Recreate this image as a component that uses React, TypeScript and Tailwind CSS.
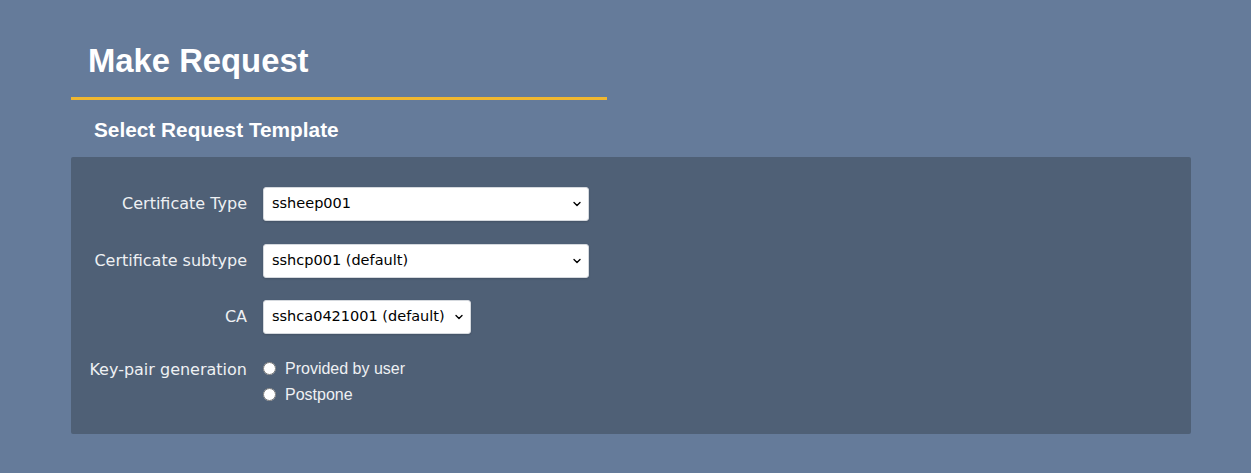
import { ChevronDown } from "lucide-react";

function SelectField({ label, value, width }: { label: string; value: string; width: string }) {
    return (
        <div className="flex items-center">
            <label className="w-[158px] shrink-0 text-right text-[16px] text-[#eef0f3] font-['DejaVu_Sans',sans-serif]">
                {label}
            </label>
            <div className={`relative ml-4 ${width}`}>
                <select
                    defaultValue={value}
                    className="h-[34px] w-full appearance-none rounded-[3px] border border-[#d5d9de] bg-white pl-[8px] pr-[20px] text-[14.5px] text-black font-['DejaVu_Sans',sans-serif] shadow-[0_1px_2px_rgba(0,0,0,0.15)]"
                >
                    <option>{value}</option>
                </select>
                <ChevronDown className="pointer-events-none absolute right-[6px] top-1/2 h-[12px] w-[12px] -translate-y-1/2 text-black" strokeWidth={2.75} />
            </div>
        </div>
    );
}

export default function App() {
    return (
        <div className="min-h-[473px] w-full bg-[#657b9a] pt-[39px] font-['Liberation_Sans',Arial,sans-serif]">
            <div className="mx-[71px] w-[1120px]">
                {/* Page title */}
                <div className="w-[536px] border-b-[3px] border-[#f0b72f] pb-[14px] pl-[17px]">
                    <h1 className="text-[32.8px] font-bold leading-[44px] text-white">Make Request</h1>
                </div>

                {/* Section title */}
                <h2 className="pl-[23px] pt-[18px] pb-[15px] text-[20.8px] font-bold leading-[24px] text-white">
                    Select Request Template
                </h2>

                {/* Form panel */}
                <div className="flex flex-col gap-[22.5px] rounded-[2px] bg-[#4f6076] pl-[18px] pt-[30px] pb-[30px]">
                    <SelectField label="Certificate Type" value="ssheep001" width="w-[326px]" />
                    <SelectField label="Certificate subtype" value="sshcp001 (default)" width="w-[326px]" />
                    <SelectField label="CA" value="sshca0421001 (default)" width="w-[208px]" />

                    <div className="flex items-start">
                        <span className="mt-[1px] w-[158px] shrink-0 text-right text-[16px] text-[#eef0f3] font-['DejaVu_Sans',sans-serif]">
                            Key-pair generation
                        </span>
                        <div className="ml-4 mt-[2px] flex flex-col gap-[7px]">
                            <label className="flex items-center gap-[9px] text-[16px] leading-[19px] text-[#eef0f3]">
                                <input type="radio" name="keypair" className="h-[13px] w-[13px]" />
                                Provided by user
                            </label>
                            <label className="flex items-center gap-[9px] text-[16px] leading-[19px] text-[#eef0f3]">
                                <input type="radio" name="keypair" className="h-[13px] w-[13px]" />
                                Postpone
                            </label>
                        </div>
                    </div>
                </div>
            </div>
        </div>
    );
}
